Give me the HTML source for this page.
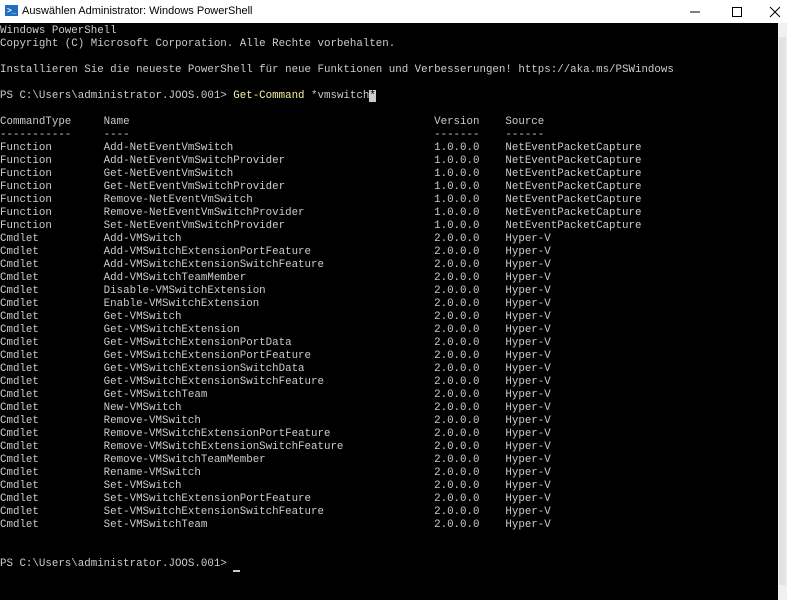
<!DOCTYPE html>
<html><head><style>
body{margin:0;width:787px;height:600px;overflow:hidden;background:#000;position:relative;font-family:"Liberation Sans",sans-serif}
#tb{position:absolute;left:0;top:0;width:787px;height:23px;background:#fff}
#tb .t{position:absolute;left:22px;top:5px;font-size:11px;color:#000}
#tb .ic{position:absolute;left:5px;top:5px;width:13px;height:11px;background:#1e6fbf;color:#fff;font-size:8px;line-height:11px;text-align:center;font-weight:bold}
#sb{position:absolute;left:778px;top:23px;width:9px;height:577px;background:#f0f0f0}
#th{position:absolute;left:779px;top:37px;width:7px;height:548px;background:#e3e3e3}
pre{position:absolute;left:0;top:25px;margin:0;font-family:"Liberation Mono",monospace;font-size:10.8px;line-height:13px;color:#cccccc}
.y{color:#f9f1a5}
.cur{background:#ccc;color:#000}
</style></head><body>
<div id="tb"><div class="ic">&gt;_</div><div class="t">Auswählen Administrator: Windows PowerShell</div>
<svg style="position:absolute;left:690px;top:6px" width="90" height="12"><line x1="0" y1="6" x2="10" y2="6" stroke="#000"/><rect x="42.5" y="1.5" width="9" height="9" fill="none" stroke="#000"/><path d="M80 1L90 11M90 1L80 11" stroke="#000"/></svg></div>
<div id="sb"></div><div id="th"></div>
<pre>Windows PowerShell
Copyright (C) Microsoft Corporation. Alle Rechte vorbehalten.

Installieren Sie die neueste PowerShell für neue Funktionen und Verbesserungen! https://aka.ms/PSWindows

PS C:\Users\administrator.JOOS.001> <span class="y">Get-Command</span> *vmswitch<span class="cur">*</span>

CommandType     Name                                               Version    Source
-----------     ----                                               -------    ------
Function        Add-NetEventVmSwitch                               1.0.0.0    NetEventPacketCapture
Function        Add-NetEventVmSwitchProvider                       1.0.0.0    NetEventPacketCapture
Function        Get-NetEventVmSwitch                               1.0.0.0    NetEventPacketCapture
Function        Get-NetEventVmSwitchProvider                       1.0.0.0    NetEventPacketCapture
Function        Remove-NetEventVmSwitch                            1.0.0.0    NetEventPacketCapture
Function        Remove-NetEventVmSwitchProvider                    1.0.0.0    NetEventPacketCapture
Function        Set-NetEventVmSwitchProvider                       1.0.0.0    NetEventPacketCapture
Cmdlet          Add-VMSwitch                                       2.0.0.0    Hyper-V
Cmdlet          Add-VMSwitchExtensionPortFeature                   2.0.0.0    Hyper-V
Cmdlet          Add-VMSwitchExtensionSwitchFeature                 2.0.0.0    Hyper-V
Cmdlet          Add-VMSwitchTeamMember                             2.0.0.0    Hyper-V
Cmdlet          Disable-VMSwitchExtension                          2.0.0.0    Hyper-V
Cmdlet          Enable-VMSwitchExtension                           2.0.0.0    Hyper-V
Cmdlet          Get-VMSwitch                                       2.0.0.0    Hyper-V
Cmdlet          Get-VMSwitchExtension                              2.0.0.0    Hyper-V
Cmdlet          Get-VMSwitchExtensionPortData                      2.0.0.0    Hyper-V
Cmdlet          Get-VMSwitchExtensionPortFeature                   2.0.0.0    Hyper-V
Cmdlet          Get-VMSwitchExtensionSwitchData                    2.0.0.0    Hyper-V
Cmdlet          Get-VMSwitchExtensionSwitchFeature                 2.0.0.0    Hyper-V
Cmdlet          Get-VMSwitchTeam                                   2.0.0.0    Hyper-V
Cmdlet          New-VMSwitch                                       2.0.0.0    Hyper-V
Cmdlet          Remove-VMSwitch                                    2.0.0.0    Hyper-V
Cmdlet          Remove-VMSwitchExtensionPortFeature                2.0.0.0    Hyper-V
Cmdlet          Remove-VMSwitchExtensionSwitchFeature              2.0.0.0    Hyper-V
Cmdlet          Remove-VMSwitchTeamMember                          2.0.0.0    Hyper-V
Cmdlet          Rename-VMSwitch                                    2.0.0.0    Hyper-V
Cmdlet          Set-VMSwitch                                       2.0.0.0    Hyper-V
Cmdlet          Set-VMSwitchExtensionPortFeature                   2.0.0.0    Hyper-V
Cmdlet          Set-VMSwitchExtensionSwitchFeature                 2.0.0.0    Hyper-V
Cmdlet          Set-VMSwitchTeam                                   2.0.0.0    Hyper-V


PS C:\Users\administrator.JOOS.001> <span style="border-bottom:2px solid #ccc">&nbsp;</span></pre>
</body></html>
